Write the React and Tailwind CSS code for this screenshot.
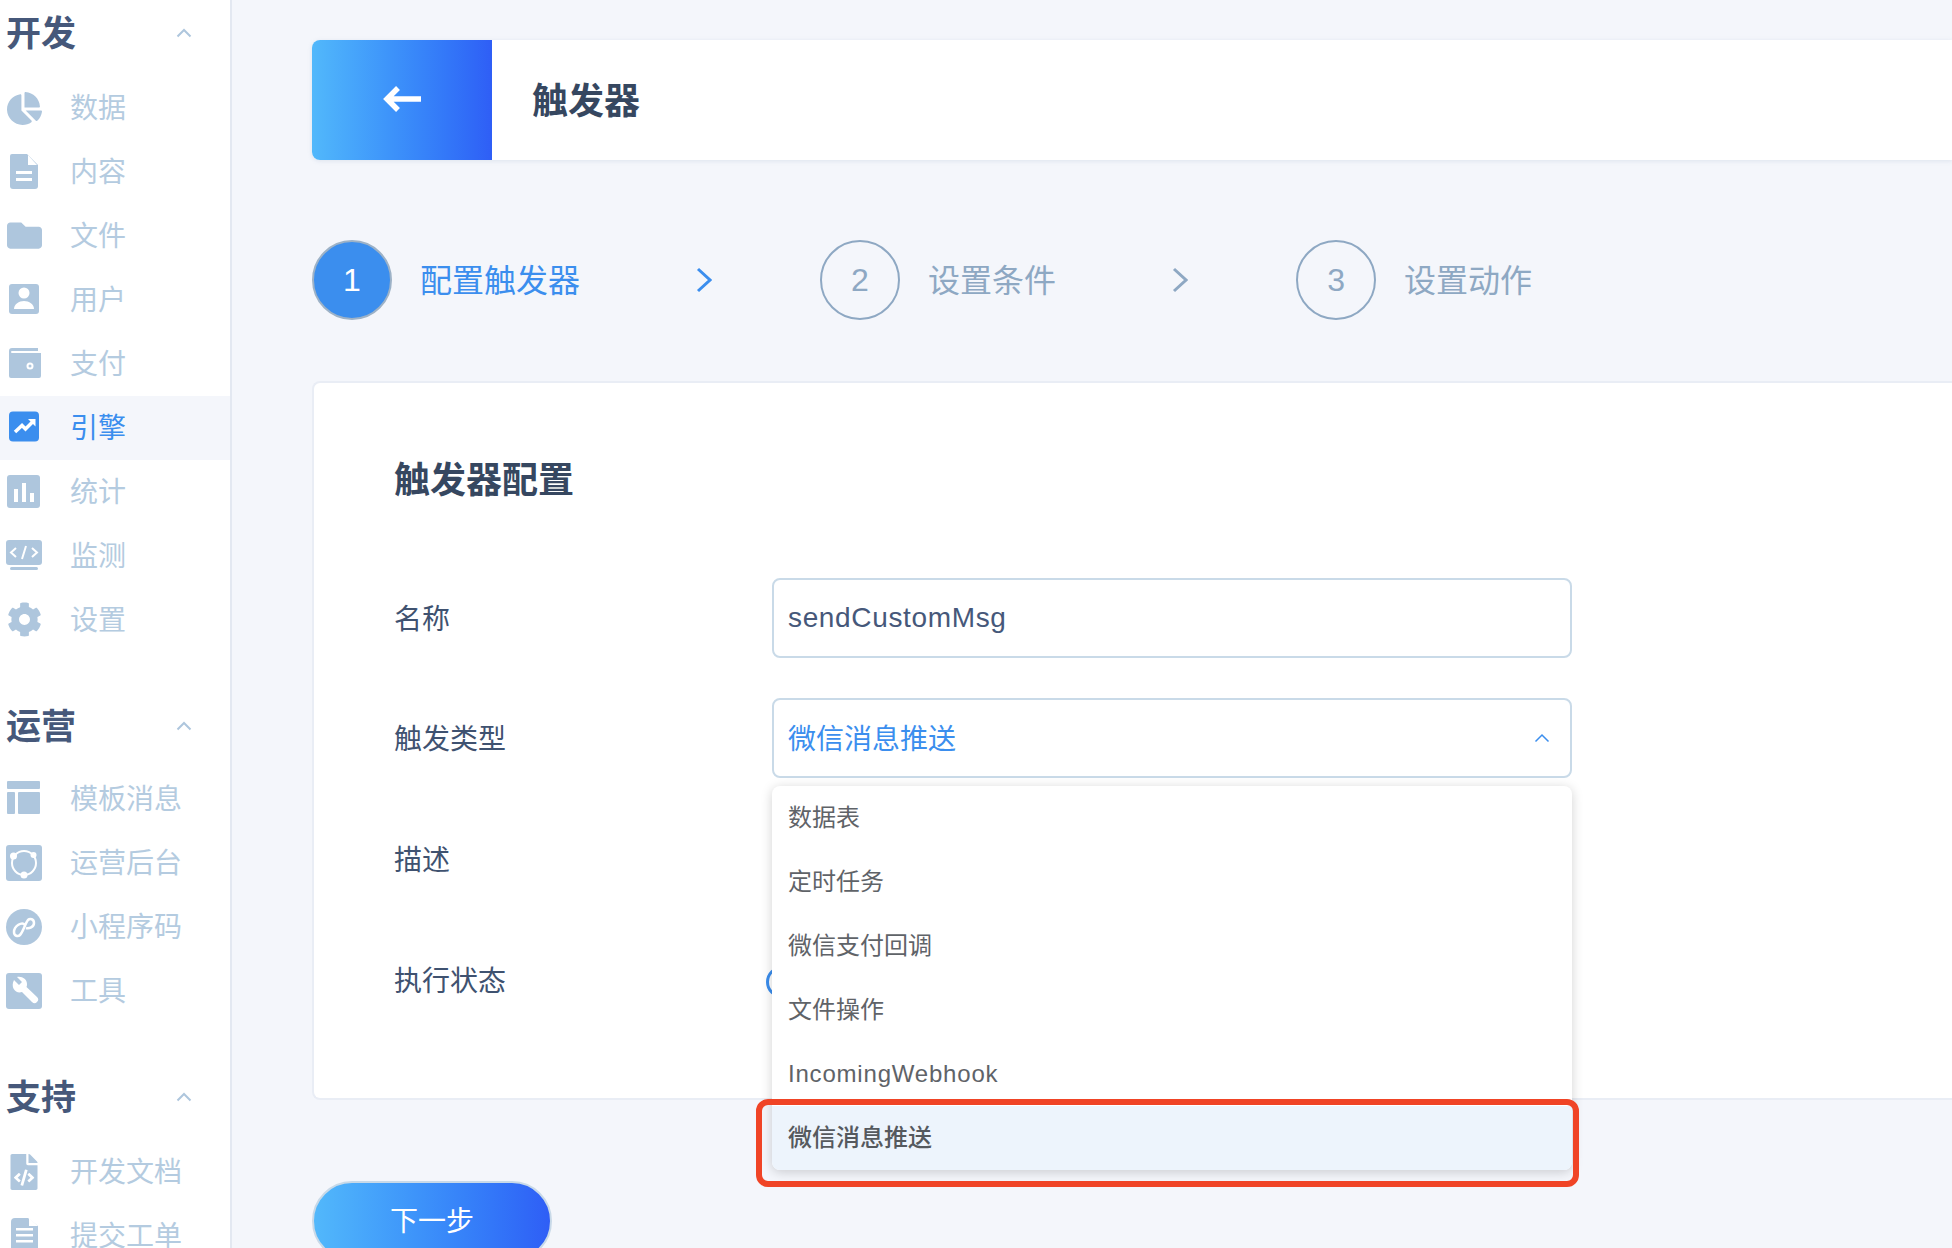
import { FaChartPie, FaFolder, FaCog, FaFileCode } from 'react-icons/fa';

const CJK = 'font-["Liberation_Sans","Noto_Sans_CJK_SC",sans-serif]';

function Box({ children }) {
  return (
    <svg viewBox="0 0 36 36" className="w-9 h-9 shrink-0" fill="#aec6dd">
      {children}
    </svg>
  );
}

const FileIcon = () => (
  <Box>
    <path d="M6 0h15l11 11v21a3 3 0 0 1-3 3H7a3 3 0 0 1-3-3V2a2 2 0 0 1 2-2z" />
    <path d="M22 1l9 10h-9z" fill="#fff" />
    <rect x="10" y="17" width="16" height="3" fill="#fff" />
    <rect x="10" y="24" width="16" height="3" fill="#fff" />
  </Box>
);
const UserIcon = () => (
  <Box>
    <rect x="3" y="2" width="30" height="30" rx="3" />
    <circle cx="18" cy="11" r="5.500" fill="#fff" />
    <path d="M8 27c0-5 5-8 10-8s10 3 10 8z" fill="#fff" />
  </Box>
);
const WalletIcon = () => (
  <Box>
    <path d="M6 2h26v3H6a1 1 0 0 0 0 2h29v23a2 2 0 0 1-2 2H5a2 2 0 0 1-2-2V5a3 3 0 0 1 3-3z" />
    <circle cx="24" cy="20" r="3.500" fill="#fff" />
    <circle cx="24" cy="20" r="1.500" />
  </Box>
);
const TrendIcon = () => (
  <svg viewBox="0 0 36 36" className="w-9 h-9 shrink-0" fill="#3b8eee">
    <rect x="3" y="1.500" width="30" height="30" rx="4" />
    <path d="M9 22l7-6.500 3.500 3.500 7.500-7.500" fill="none" stroke="#fff" strokeWidth="3.500" />
    <path d="M22 9h7.500v7.500z" fill="#fff" />
  </svg>
);
const BarsIcon = () => (
  <Box>
    <rect x="1" y="1" width="33" height="33" rx="3" />
    <rect x="8" y="15" width="4" height="13" fill="#fff" />
    <rect x="16" y="9" width="4" height="19" fill="#fff" />
    <rect x="24" y="19" width="4" height="9" fill="#fff" />
  </Box>
);
const MonitorIcon = () => (
  <Box>
    <rect x="0" y="2" width="36" height="25" rx="3" />
    <rect x="4" y="29" width="28" height="3" rx="1.500" />
    <path d="M10 10l-5 4.500 5 4.500M26 10l5 4.500-5 4.500M20 8l-4 13" fill="none" stroke="#fff" strokeWidth="2" />
  </Box>
);
const LayoutIcon = () => (
  <Box>
    <rect x="1" y="0" width="33" height="8" rx="1" />
    <rect x="1" y="11" width="8" height="22" rx="1" />
    <rect x="12" y="11" width="22" height="22" rx="1" />
  </Box>
);
const OpsIcon = () => (
  <Box>
    <rect x="0" y="0" width="36" height="36" rx="3" />
    <circle cx="18" cy="18" r="12" fill="none" stroke="#fff" strokeWidth="2" />
    <circle cx="7.500" cy="11" r="3.500" fill="#fff" />
    <circle cx="27.500" cy="10" r="3" fill="#fff" />
    <circle cx="18" cy="30" r="3.500" fill="#fff" />
  </Box>
);
const LinkIcon = () => (
  <Box>
    <circle cx="18" cy="18" r="18" />
    <path
      d="M19 16C16 12 8 17 8 23C8 27 12 28 14 26C17 23 19 15 22 11C24 9 28 10 28 14C28 18 23 20 20 19"
      fill="none"
      stroke="#fff"
      strokeWidth="2.500"
    />
  </Box>
);
const WrenchIcon = () => (
  <Box>
    <rect x="0" y="0" width="36" height="36" rx="3" />
    <path d="M8 7l5 5 3-3-5-5c5-1 10 2 10 7 0 1 0 2-.5 3L31 24a3.500 3.500 0 0 1-5 5L16 19c-6 2-12-4-8-12z" fill="#fff" />
  </Box>
);
const DocIcon = () => (
  <Box>
    <path d="M9 0h13l10 8v28H8a3 3 0 0 1-3-3V4a4 4 0 0 1 4-4z" />
    <rect x="10" y="10" width="17" height="2.500" fill="#fff" />
    <rect x="10" y="16" width="17" height="2.500" fill="#fff" />
    <rect x="10" y="22" width="17" height="2.500" fill="#fff" />
    <path d="M23 0l9 8h-9z" fill="#fff" />
  </Box>
);

const Pie = () => (
  <span className="w-9 h-9 shrink-0 flex items-center justify-center text-[#aec6dd]">
    <FaChartPie size={35} />
  </span>
);
const Folder = () => (
  <span className="w-9 h-9 shrink-0 flex items-center justify-center text-[#aec6dd] -translate-y-px">
    <FaFolder size={35} />
  </span>
);
const Gear = () => (
  <span className="w-9 h-9 shrink-0 flex items-center justify-center text-[#aec6dd] -translate-y-px">
    <FaCog size={35} />
  </span>
);
const FileCode = () => (
  <span className="w-9 h-9 shrink-0 flex items-center justify-center text-[#aec6dd]">
    <FaFileCode size={36} />
  </span>
);

const groups = [
  {
    title: '开发',
    gap: 'mb-[49px]',
    head: 'mb-[18px]',
    items: [
      ['数据', Pie],
      ['内容', FileIcon],
      ['文件', Folder],
      ['用户', UserIcon],
      ['支付', WalletIcon],
      ['引擎', TrendIcon, true],
      ['统计', BarsIcon],
      ['监测', MonitorIcon],
      ['设置', Gear],
    ],
  },
  {
    title: '运营',
    gap: 'mb-[49px]',
    head: 'mb-[16px]',
    items: [
      ['模板消息', LayoutIcon],
      ['运营后台', OpsIcon],
      ['小程序码', LinkIcon],
      ['工具', WrenchIcon],
    ],
  },
  {
    title: '支持',
    gap: 'mb-0',
    head: 'mb-[18px]',
    items: [
      ['开发文档', FileCode],
      ['提交工单', DocIcon],
    ],
  },
];

function Chevron({ className, width = 2 }) {
  return (
    <svg viewBox="0 0 16 10" className={className} fill="none" stroke="currentColor" strokeWidth={width}>
      <path d="M1.500 8.500L8 2l6.500 6.500" />
    </svg>
  );
}

function StepArrow({ className }) {
  return (
    <svg viewBox="0 0 16 26" className={`w-4 h-[26px] shrink-0 ${className}`} fill="none" stroke="currentColor" strokeWidth="3">
      <path d="M2 2l12 11L2 24" />
    </svg>
  );
}

function Sidebar() {
  return (
    <aside className="w-[232px] shrink-0 bg-white border-r-2 border-[#e3e8f1] pt-2">
      {groups.map((g) => (
        <div key={g.title} className={g.gap}>
          <div className={`h-[50px] ${g.head} flex items-center justify-between pl-[6px] pr-[38px]`}>
            <span className="text-[35px] pt-[2px] font-semibold text-[#46587a]">{g.title}</span>
            <Chevron className="w-4 h-[10px] text-[#aec6dd]" />
          </div>
          {g.items.map(([label, Icon, active]) => (
            <div key={label} className={`h-16 flex items-center gap-[28px] pl-[6px] ${active ? 'bg-[#f4f6fb]' : ''}`}>
              <Icon />
              <span className={`text-[28px] pt-[2px] ${active ? 'text-[#3b8eee]' : 'text-[#b4cbe0]'}`}>{label}</span>
            </div>
          ))}
        </div>
      ))}
    </aside>
  );
}

function Step({ n, label, active }) {
  return (
    <div className="flex items-center gap-[28px] shrink-0">
      <div
        className={`w-20 h-20 rounded-full border-2 flex items-center justify-center text-[32px] ${
          active ? 'bg-[#3b8eee] border-[#9db2c7] text-white' : 'border-[#8ea8c3] text-[#8ea8c3]'
        }`}
      >
        {n}
      </div>
      <span className={`text-[32px] pt-[2px] ${active ? 'text-[#3b8eee]' : 'text-[#8ea8c3]'}`}>{label}</span>
    </div>
  );
}

function Row({ label, children }) {
  return (
    <div className="flex items-center">
      <div className="w-[378px] shrink-0 pt-[3px] text-[28px] text-[#3f5270]">{label}</div>
      {children}
    </div>
  );
}

const options = ['数据表', '定时任务', '微信支付回调', '文件操作'];

export default function App() {
  return (
    <div className={`h-[1248px] w-[1952px] overflow-hidden flex bg-[#f4f6fb] ${CJK}`}>
      <Sidebar />
      <main className="flex-1 min-w-0 pl-20 pt-10">
        <header className="h-[120px] flex bg-white rounded-l-lg shadow-[0_1px_4px_rgba(150,170,200,0.25)]">
          <div className="w-[180px] rounded-l-lg bg-gradient-to-r from-[#52b8fb] to-[#2f5ef6] flex items-center justify-center pb-[3px]">
            <svg viewBox="0 0 38 26" className="w-[38px] h-[26px]" fill="none" stroke="#fff" strokeWidth="5.500">
              <path d="M15 2L4 13l11 11M4 13h34" />
            </svg>
          </div>
          <h1 className="ml-10 self-center pt-[4px] text-[36px] font-semibold text-[#364760]">触发器</h1>
        </header>

        <div className="mt-20 h-20 flex items-center">
          <Step n="1" label="配置触发器" active />
          <StepArrow className="ml-[116px] text-[#3b8eee]" />
          <div className="ml-[108px]">
            <Step n="2" label="设置条件" />
          </div>
          <StepArrow className="ml-[116px] text-[#8ea8c3]" />
          <div className="ml-[108px]">
            <Step n="3" label="设置动作" />
          </div>
        </div>

        <section className="mt-[61px] h-[719px] bg-white border-2 border-[#e9edf5] border-r-0 rounded-l-lg pl-[80px] pt-[73px]">
          <h2 className="h-[50px] flex items-center text-[36px] font-semibold text-[#364760]">触发器配置</h2>
          <div className="mt-[72px] flex flex-col gap-10">
            <Row label="名称">
              <div className="w-[800px] h-20 border-2 border-[#c9dae8] rounded-lg flex items-center px-[14px] text-[28px] tracking-[0.65px] text-[#46587a]">
                sendCustomMsg
              </div>
            </Row>
            <Row label="触发类型">
              <div className="relative w-[800px] h-20">
                <div className="h-full border-2 border-[#c9dae8] rounded-lg flex items-center justify-between pl-[14px] pr-[20px] text-[28px] text-[#3b8eee]">
                  <span className="pt-[3px]">微信消息推送</span>
                  <Chevron className="w-4 h-[10px]" width={1.5} />
                </div>
                <div className="absolute z-10 left-0 right-0 top-[88px] bg-white rounded-lg shadow-[0_2px_12px_rgba(0,0,0,0.18)]">
                  {options.map((o) => (
                    <div key={o} className="h-16 flex items-center px-4 text-[24px] text-[#5f6368]">
                      {o}
                    </div>
                  ))}
                  <div className="h-16 flex items-center px-4 text-[24px] tracking-[0.8px] text-[#5f6368]">
                    IncomingWebhook
                  </div>
                  <div className="h-16 flex items-center px-4 text-[24px] font-medium text-[#55595e] bg-[#edf4fc] rounded-b-lg">
                    微信消息推送
                  </div>
                  <div className="absolute left-[-16px] right-[-7px] top-[313px] bottom-[-17px] border-[6px] border-[#f04426] rounded-xl" />
                </div>
              </div>
            </Row>
            <Row label="描述">
              <div className="w-[800px] h-[82px] border-2 border-[#c9dae8] rounded-lg" />
            </Row>
            <Row label="执行状态">
              <div className="h-20 flex items-center pt-[3px]">
                <div className="-ml-[6px] w-8 h-8 rounded-full border-[3px] border-[#3b8eee]" />
              </div>
            </Row>
          </div>
        </section>

        <button className="mt-[81px] w-[240px] h-20 pt-[2px] rounded-full border-2 border-[#c8d9e8] bg-gradient-to-r from-[#52b8fb] to-[#2f5ef6] text-white text-[28px]">
          下一步
        </button>
      </main>
    </div>
  );
}
